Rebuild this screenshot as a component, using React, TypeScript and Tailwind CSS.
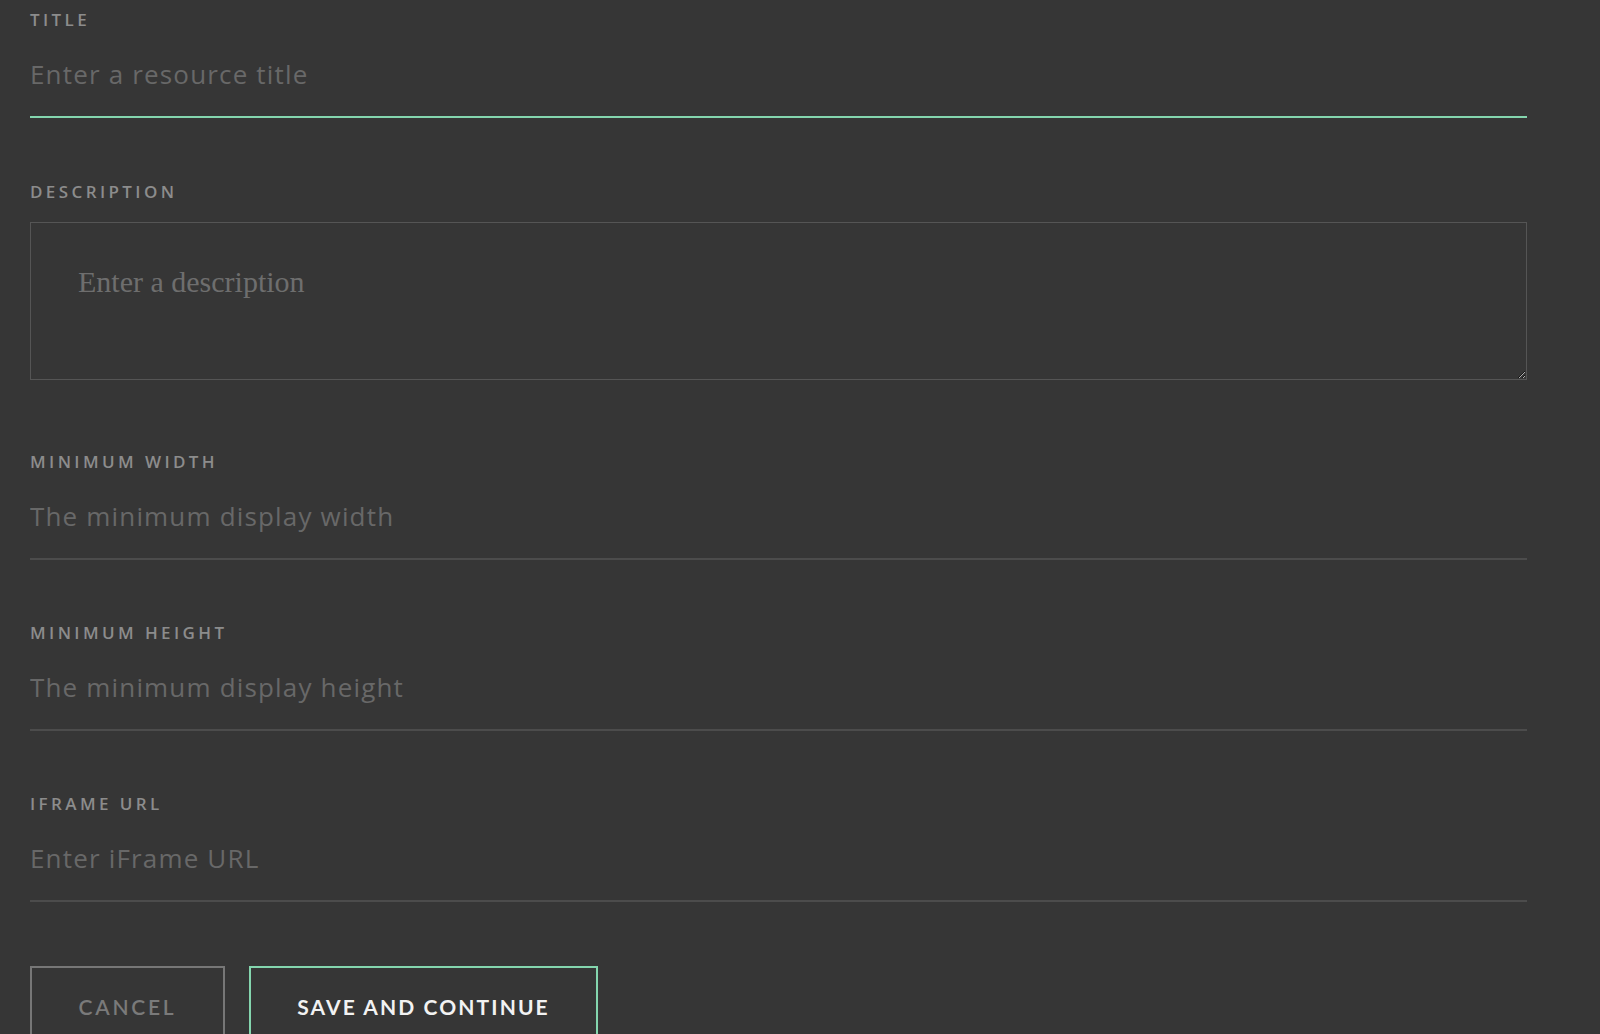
import React from 'react';

interface LineFieldProps {
  label: string;
  placeholder: string;
  focused?: boolean;
}

const labelCls =
  "block font-['Open_Sans',sans-serif] text-[17px] leading-[20px] font-semibold uppercase tracking-[0.2em] text-[#8c8c8c]";

const LineField: React.FC<LineFieldProps> = ({ label, placeholder, focused }) => (
  <div className="flex flex-col">
    <label className={labelCls}>{label}</label>
    <input
      type="text"
      placeholder={placeholder}
      className={
        "mt-[12px] pt-[16px] pb-[26px] w-full bg-transparent font-['Open_Sans',sans-serif] text-[26px] leading-[32px] tracking-[0.045em] text-[#d0d0d0] placeholder:text-[#686868] outline-none border-b-2 " +
        (focused ? "border-[#84d6ae]" : "border-[#4c4c4c]")
      }
    />
  </div>
);

export default function App() {
  return (
    <div className="min-h-screen bg-[#363636] font-['Lato','Open_Sans',sans-serif] pt-[10px] overflow-hidden">
      <form className="ml-[30px] w-[1497px] flex flex-col">
        <LineField label="Title" placeholder="Enter a resource title" focused />

        <div className="mt-[64px] flex flex-col">
          <label className={labelCls}>Description</label>
          <textarea
            placeholder="Enter a description"
            className="mt-[20px] h-[158px] w-full bg-transparent border border-[#555555] pl-[47px] pt-[42px] text-[30px] leading-[34px] text-[#d0d0d0] placeholder:text-[#6e6e6e] outline-none font-['Liberation_Serif',serif]"
          />
        </div>

        <div className="mt-[72px]">
          <LineField label="Minimum Width" placeholder="The minimum display width" />
        </div>
        <div className="mt-[63px]">
          <LineField label="Minimum Height" placeholder="The minimum display height" />
        </div>
        <div className="mt-[63px]">
          <LineField label="iFrame URL" placeholder="Enter iFrame URL" />
        </div>

        <div className="mt-[64px] flex gap-[24px]">
          <button
            type="button"
            className="h-[82px] w-[195px] border-2 border-[#777777] text-[21px] font-semibold uppercase tracking-[0.13em] text-[#7a7a7a] flex items-center justify-center"
          >
            Cancel
          </button>
          <button
            type="submit"
            className="h-[82px] w-[349px] border-2 border-[#84d6ae] text-[21px] font-bold uppercase tracking-[0.1em] text-[#f2f2f2] flex items-center justify-center"
          >
            Save and Continue
          </button>
        </div>
      </form>
    </div>
  );
}
